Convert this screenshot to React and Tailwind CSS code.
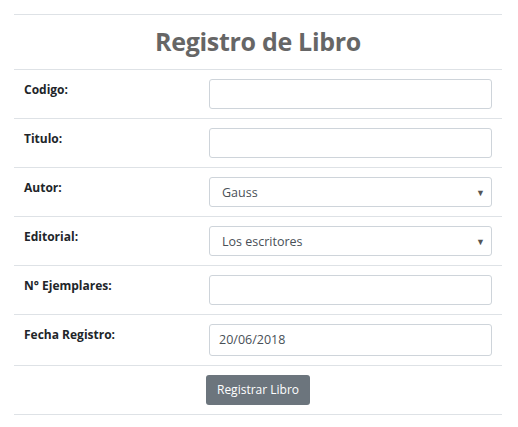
const FIELDS = [
  { label: 'Codigo:', type: 'input', value: '' },
  { label: 'Titulo:', type: 'input', value: '' },
  { label: 'Autor:', type: 'select', value: 'Gauss' },
  { label: 'Editorial:', type: 'select', value: 'Los escritores' },
  { label: 'N° Ejemplares:', type: 'input', value: '' },
  { label: 'Fecha Registro:', type: 'date', value: '20/06/2018' },
]

function Field({ type, value }) {
  if (type === 'select') {
    return (
      <div className="h-[30px] border border-[#ced4da] rounded-[3px] bg-white flex items-center pl-[12px] pr-[6px] text-[12.5px] text-[#495057]">
        <span className="flex-1 pt-[2px]">{value}</span>
        <span className="text-[9px] text-[#555] leading-none">▼</span>
      </div>
    )
  }
  return (
    <div className={`${type === 'date' ? 'h-[32px]' : 'h-[30px]'} border border-[#ced4da] rounded-[3px] bg-white flex items-center px-[9px] text-[12.5px] text-[#495057]`}>
      {value}
    </div>
  )
}

export default function App() {
  return (
    <div className="w-[518px] h-[427px] bg-white pt-[14px] pl-[14px] pr-[16px] font-['Open_Sans',sans-serif]">
      <div className="border-t border-[#dee2e6]">
        <div className="h-[54px] flex items-center justify-center">
          <h1 className="text-[25px] font-bold text-[#666] tracking-[-0.3px]">Registro de Libro</h1>
        </div>

        {FIELDS.map(f => (
          <div key={f.label} className="flex border-t border-[#dee2e6] py-[9px]">
            <div className="w-[185px] pl-[10px] pt-[2px] text-[12px] font-bold text-[#212529] leading-[18px]">
              {f.label}
            </div>
            <div className="flex-1 px-[10px]">
              <Field type={f.type} value={f.value} />
            </div>
          </div>
        ))}

        <div className="flex justify-center border-t border-b border-[#dee2e6] h-[50px] pt-[9px]">
          <button className="h-[30px] px-[11px] rounded-[3px] bg-[#6c757d] text-white text-[12px]">
            Registrar Libro
          </button>
        </div>
      </div>
    </div>
  )
}
